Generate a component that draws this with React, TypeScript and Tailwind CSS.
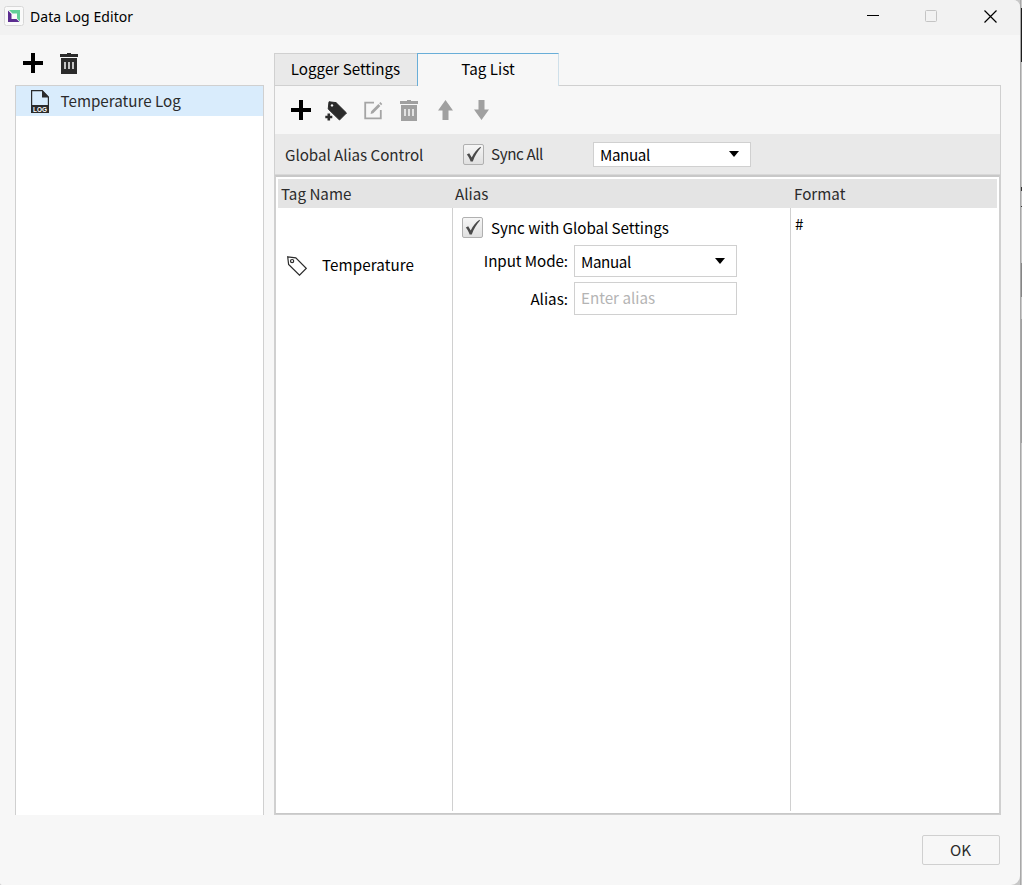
import React, { useState } from 'react';

const PlusIcon: React.FC = () => (
  <svg className="h-5 w-5 shrink-0" viewBox="0 0 20 20" fill="#000">
    <path d="M8 0h4v8h8v4h-8v8H8v-8H0V8h8z" />
  </svg>
);

const TrashIcon: React.FC<{ color: string; slot: string }> = ({ color, slot }) => (
  <svg className="h-[21px] w-[18px] shrink-0" viewBox="0 0 18 21">
    <path d="M0 1h7V0h4v1h7v3H0zM1 5h16v16H1z" fill={color} />
    <path d="M5 9v7M9 9v7M13 9v7" stroke={slot} strokeWidth="1.5" />
  </svg>
);

const LogFileIcon: React.FC = () => (
  <svg className="h-[23px] w-[18px] shrink-0" viewBox="0 0 18 23">
    <path d="M.6 15V.6h10.6L17.4 7v8" fill="none" stroke="#2b2b2b" strokeWidth="1.2" />
    <path d="M11 0l7 7.5h-7z" fill="#2b2b2b" />
    <path d="M0 15h18v8H0z" fill="#2b2b2b" />
    <text x="9" y="21.5" textAnchor="middle" fontSize="6.8" fontWeight="700" fontFamily="Liberation Sans" textLength="14" lengthAdjust="spacingAndGlyphs" fill="#fff">LOG</text>
  </svg>
);

const AddTagIcon: React.FC = () => (
  <svg className="h-[20px] w-[22px] shrink-0" viewBox="0 0 22 20">
    <path d="M4 .8L11 1.6 21.5 12 14.5 19 3.2 8z" fill="#2b2b2b" stroke="#2b2b2b" strokeLinejoin="round" />
    <circle cx="7" cy="4.4" r="1.2" fill="#f7f7f7" />
    <path d="M4 12v8M0 16h8" stroke="#f7f7f7" strokeWidth="4.5" />
    <path d="M3.8 12.5v7M.3 16h7" stroke="#2b2b2b" strokeWidth="2.6" />
  </svg>
);

const EditIcon: React.FC = () => (
  <svg className="h-[19px] w-[19px] shrink-0" viewBox="0 0 19 19">
    <path d="M10 1.7H1.2V17.3H16.8V9" fill="none" stroke="#a5a5a5" strokeWidth="1.8" />
    <path d="M7.2 10.2l7.2-7.2 2 2-7.2 7.2-2.6.8zM15.2 2.2l1.2-1.2L18.3 3l-1.2 1.2z" fill="#a5a5a5" />
  </svg>
);

const ArrowIcon: React.FC<{ down?: boolean }> = ({ down }) => (
  <svg className={down ? 'h-5 w-[15px] shrink-0 rotate-180' : 'h-5 w-[15px] shrink-0'} viewBox="0 0 15 20" fill="#a0a0a0">
    <path d="M7.5 0L15 10.5h-4.5V20h-6v-9.5H0z" />
  </svg>
);

const TagIcon: React.FC = () => (
  <svg className="h-5 w-5 shrink-0" viewBox="0 0 20 20" fill="none" stroke="#2b2b2b" strokeWidth="1.2">
    <path d="M.7.8l8.1 1L19.2 12.4l-6.7 6.8L1.6 8.4z" />
    <circle cx="5.1" cy="5.1" r="1.6" />
  </svg>
);

const Checkbox: React.FC<{ checked: boolean; onChange: () => void }> = ({ checked, onChange }) => (
  <button
    className="flex h-[21px] w-[21px] shrink-0 items-center justify-center rounded-[2px] border border-[#b0b0b0] bg-linear-to-b from-[#f6f6f6] to-[#e0e0e0]"
    onClick={onChange}
  >
    {checked && (
      <svg className="h-[17px] w-[17px]" viewBox="0 0 17 17" fill="#4a4a4a">
        <path d="M1.8 8.5l2.4-1.2 2.5 4.2C9 7.2 11.500 3.600 15.400.8l.6.8C12.600 5.400 9.900 9.800 7.800 15.400H5.600C4.700 12.800 3.500 10.500 1.800 8.500z" />
      </svg>
    )}
  </button>
);

const Caret: React.FC = () => (
  <svg className="h-[6px] w-[10px] shrink-0" viewBox="0 0 10 6">
    <path d="M0 0h10L5 6z" />
  </svg>
);

const App: React.FC = () => {
  const [activeTab, setActiveTab] = useState('tags');
  const [syncAll, setSyncAll] = useState(true);
  const [syncTag, setSyncTag] = useState(true);
  const [alias, setAlias] = useState('');

  return (
    <div className="flex h-[885px] w-[1022px] overflow-hidden bg-[#c8c8c8] font-['Noto_Sans_CJK_SC',sans-serif] text-[15.2px] leading-6 text-[#2b2b2b]">
      <div className="flex w-[1020px] flex-col overflow-hidden rounded-tr-[7px] rounded-br-[9px] rounded-bl-[2px] bg-[#f7f7f7]">
        {/* Title bar */}
        <div className="flex h-[35px] shrink-0 items-center bg-[#f2f2f2] pl-1 font-['Noto_Sans',sans-serif] text-black">
          <svg className="mb-[3px] h-5 w-5" viewBox="0 0 20 20">
            <rect x=".5" y=".5" width="19" height="19" rx="2" fill="#fafafa" stroke="#d8d8d8" />
            <path d="M5 4h11v11.500l-3-3V7.500H8.500z" fill="#62cf98" />
            <path d="M4 4.500L7.500 8v5H12.500l3 3H4z" fill="#5b2d90" />
          </svg>
          <span className="mb-[2px] ml-1.5 text-[14px] tracking-[0.08px]">Data Log Editor</span>
          <div className="ml-auto flex items-center pr-[23px] pb-[3px]">
            <svg className="h-3 w-3" viewBox="0 0 12 12">
              <path d="M0 5.500h12" stroke="#000" />
            </svg>
            <svg className="ml-[46px] h-3 w-3" viewBox="0 0 12 12" fill="none" stroke="#c4c4c4">
              <rect x=".5" y=".5" width="11" height="11" rx="1" />
            </svg>
            <svg className="ml-[47px] h-[13px] w-[13px]" viewBox="0 0 13 13" stroke="#000" strokeWidth="1.200">
              <path d="M.5.5l12 12M12.500.5l-12 12" />
            </svg>
          </div>
        </div>

        <div className="flex h-[780px] shrink-0 pl-[15px]">
          {/* Loggers */}
          <div className="flex w-[249px] flex-col">
            <div className="flex h-[50px] items-start gap-[17px] pt-[18px] pl-2">
              <PlusIcon />
              <TrashIcon color="#2b2b2b" slot="#f7f7f7" />
            </div>
            <div className="h-[730px] border border-b-0 border-[#d0d0d0] bg-white">
              <div className="flex h-[30px] items-center bg-[#d9ecfc] pl-[15px]">
                <LogFileIcon />
                <span className="mb-[2px] ml-[11.5px]">Temperature Log</span>
              </div>
            </div>
          </div>

          {/* Editor */}
          <div className="ml-[10px] flex w-[727px] flex-col pt-[18px]">
            <div className="flex h-[33px] text-black">
              <button
                className="w-[143px] border border-r-0 border-[#d0d0d0] bg-[#e9e9e9] pr-px pb-1"
                onClick={() => setActiveTab('settings')}
              >
                Logger Settings
              </button>
              <button
                className="w-[142px] border-t border-r border-l border-t-[#69aed8] border-r-[#cfe0ea] border-l-[#69aed8] bg-[#f7f7f7] pb-[5px]"
                onClick={() => setActiveTab('tags')}
                aria-selected={activeTab === 'tags'}
              >
                Tag List
              </button>
              <div className="flex-1 border-b border-[#d0d0d0]" />
            </div>

            <div className="flex h-[729px] flex-col border border-t-0 border-[#d0d0d0]">
              <div className="flex h-12 shrink-0 items-center pl-4">
                <PlusIcon />
                <span className="ml-[14px] flex pt-px"><AddTagIcon /></span>
                <span className="ml-[17px] flex"><EditIcon /></span>
                <span className="ml-[17px] flex"><TrashIcon color="#a0a0a0" slot="#f7f7f7" /></span>
                <span className="ml-[19.5px] flex"><ArrowIcon /></span>
                <span className="ml-[21px] flex"><ArrowIcon down /></span>
              </div>

              <div className="flex h-[41px] shrink-0 items-center border-b border-[#d8d8d8] bg-[#e9e9e9] pl-[10px]">
                <span className="w-[178px] tracking-[-0.05px]">Global Alias Control</span>
                <Checkbox checked={syncAll} onChange={() => setSyncAll(!syncAll)} />
                <span className="mb-[3px] ml-[7px] w-[102px] tracking-[-0.4px]">Sync All</span>
                <div className="flex h-[25px] w-[158px] items-center justify-between border border-[#d0d0d0] bg-white pr-[11px] pl-[6px] text-black">
                  <span className="mb-px tracking-[-0.4px]">Manual</span>
                  <Caret />
                </div>
              </div>

              <div className="flex flex-1 flex-col border border-t-2 border-[#c8c8c8] border-x-[#d0d0d0] bg-white p-[2px]">
                <div className="flex h-[29px] shrink-0 items-center bg-[#e4e4e4] pb-px pl-[3px]">
                  <span className="w-[174px]">Tag Name</span>
                  <span className="w-[339px]">Alias</span>
                  <span>Format</span>
                </div>
                <div className="flex flex-1 text-black">
                  <div className="flex w-[174px] items-start pt-[44px] pl-[9px]">
                    <span className="mt-[4px] flex"><TagIcon /></span>
                    <span className="ml-[15px] tracking-[0.08px]">Temperature</span>
                  </div>
                  <div className="flex w-[338px] flex-col border-l border-[#d0d0d0] pt-[7px] pl-[9px]">
                    <div className="flex h-6 items-center">
                      <Checkbox checked={syncTag} onChange={() => setSyncTag(!syncTag)} />
                      <span className="ml-2 tracking-[-0.05px]">Sync with Global Settings</span>
                    </div>
                    <div className="mt-[6px] flex h-8 items-center">
                      <span className="mr-[6px] mb-[2px] w-[106px] text-right tracking-[-0.08px]">Input Mode:</span>
                      <div className="flex h-8 w-[163px] items-center justify-between border border-[#d0d0d0] pr-[11px] pl-[6px]">
                        <span className="mb-px tracking-[-0.4px]">Manual</span>
                        <Caret />
                      </div>
                    </div>
                    <div className="mt-[5px] flex h-[33px] items-center">
                      <span className="mr-[6px] mb-[2px] w-[106px] text-right">Alias:</span>
                      <input
                        className="h-[33px] w-[163px] border border-[#d0d0d0] px-[6px] pb-1 outline-none placeholder:text-[#b4b4b4]"
                        placeholder="Enter alias"
                        value={alias}
                        onChange={e => setAlias(e.target.value)}
                      />
                    </div>
                  </div>
                  <div className="flex-1 border-l border-[#d0d0d0] pt-[3px] pl-1">#</div>
                </div>
              </div>
            </div>
          </div>
        </div>

        <div className="flex justify-end pt-5 pr-5">
          <button className="h-[30px] w-[78px] rounded-[2px] border border-[#d0d0d0] bg-[#f7f7f7] pr-px pb-[3px]">OK</button>
        </div>
      </div>
      {/* Desktop edge behind the window */}
      <div className="flex w-[2px] flex-col border-l border-[#a8a8a8]">
        <div className="mt-2 h-[54px] bg-[#1c1c1c]" />
        <div className="mt-[125px] h-1 bg-[#333]" />
        <div className="mt-[15px] h-px bg-[#333]" />
        <div className="mt-[56px] h-[34px] bg-[#858585]" />
        <div className="mt-[22px] h-[124px] bg-[#a0a0a0]" />
      </div>
    </div>
  );
};

export default App;
